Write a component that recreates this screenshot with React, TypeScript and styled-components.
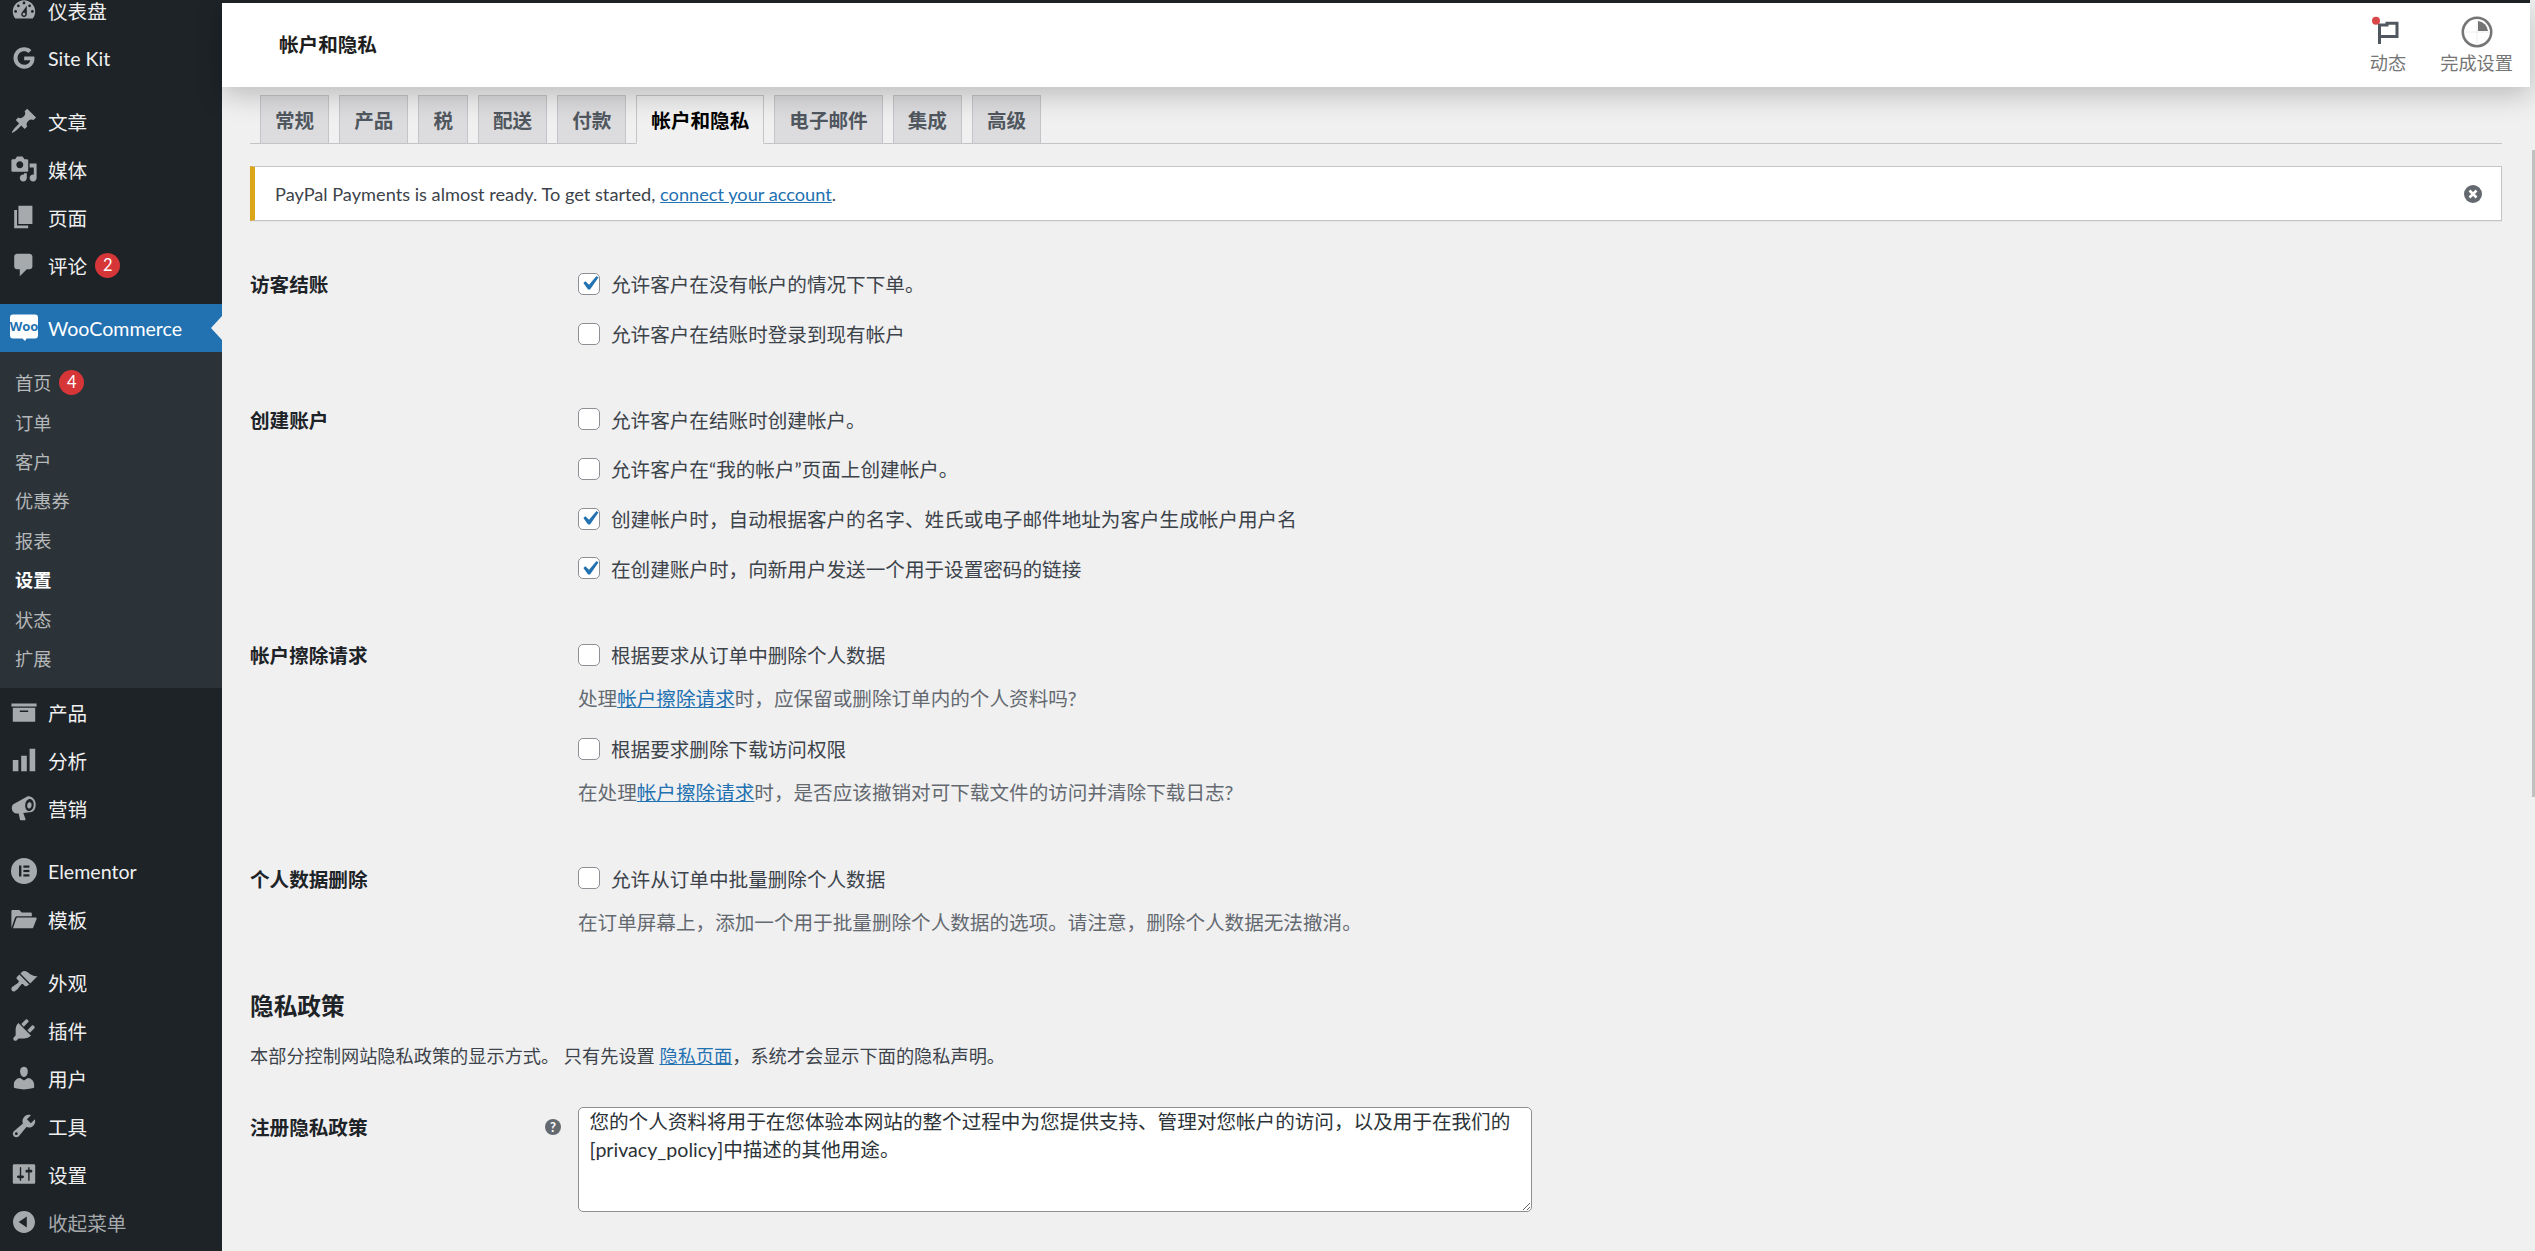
import React from "react";
import styled, { createGlobalStyle } from "styled-components";
import { FaGoogle } from "react-icons/fa";

const GlobalStyle = createGlobalStyle`
  html, body {
    margin: 0;
    padding: 0;
    height: 100%;
    overflow: hidden;
    background: #f0f0f1;
  }
  * {
    box-sizing: border-box;
  }
  body {
    font-family: Lato, "Noto Sans CJK SC", sans-serif;
    color: #3c434a;
  }
`;

const dashicons: Record<string, string> = {
  dashboard:
    "M3.76 16h12.48c1.1-1.37 1.76-3.11 1.76-5 0-4.42-3.58-8-8-8s-8 3.58-8 8c0 1.89.66 3.63 1.76 5zM10 4c.55 0 1 .45 1 1s-.45 1-1 1-1-.45-1-1 .45-1 1-1zM6 6c.55 0 1 .45 1 1s-.45 1-1 1-1-.45-1-1 .45-1 1-1zm8 0c.55 0 1 .45 1 1s-.45 1-1 1-1-.45-1-1 .45-1 1-1zm-5.37 5.55L12 7v6c0 1.1-.9 2-2 2s-2-.9-2-2c0-.57.24-1.08.63-1.45zM4 10c.55 0 1 .45 1 1s-.45 1-1 1-1-.45-1-1 .45-1 1-1zm12 0c.55 0 1 .45 1 1s-.45 1-1 1-1-.45-1-1 .45-1 1-1zm-5 3c0-.55-.45-1-1-1s-1 .45-1 1 .45 1 1 1 1-.45 1-1z",
  post: "M10.44 3.02l1.82-1.82 6.36 6.35-1.83 1.82c-1.05-.68-2.48-.57-3.41.36l-.75.75c-.92.93-1.04 2.35-.35 3.41l-1.83 1.82-2.41-2.41-2.8 2.79c-.42.42-3.38 2.71-3.8 2.29s1.86-3.39 2.28-3.81l2.79-2.79L4.1 9.36l1.83-1.82c1.05.69 2.48.57 3.4-.36l.75-.75c.93-.92 1.05-2.35.36-3.41z",
  media:
    "M13 11V4c0-.55-.45-1-1-1h-1.67L9 1H5L3.67 3H2c-.55 0-1 .45-1 1v7c0 .55.45 1 1 1h10c.55 0 1-.45 1-1zM7 4.5c1.38 0 2.5 1.12 2.5 2.5S8.38 9.5 7 9.5 4.5 8.38 4.5 7 5.62 4.5 7 4.5zM14 6h5v10.5c0 1.38-1.12 2.5-2.5 2.5S14 17.88 14 16.5s1.12-2.5 2.5-2.5c.17 0 .34.02.5.05V9h-3V6zm-4 8.05V13h2v3.5c0 1.38-1.12 2.5-2.5 2.5S7 17.88 7 16.5 8.12 14 9.5 14c.17 0 .34.02.5.05z",
  page: "M6 15V2h10v13H6zm-1 1h8v2H3V5h2v11z",
  comments:
    "M5 2h9c1.1 0 2 .9 2 2v7c0 1.1-.9 2-2 2h-2l-5 5v-5H5c-1.1 0-2-.9-2-2V4c0-1.1.9-2 2-2z",
  archive: "M19 4v2H1V4h18zM2 7h16v10H2V7zm11 3V9H7v1h6z",
  chart: "M18 18V2h-4v16h4zm-6 0V7H8v11h4zm-6 0v-8H2v8h4z",
  megaphone:
    "M16.9 3.4c1.1 1.2 1.7 3.2 1.4 5.3-.3 2.1-1.4 3.7-2.8 4.2l-6 .7 1.6 4.4c.1.4-.2.8-.6.8H7.7c-.3 0-.6-.2-.6-.5L6.2 14H4.8c-1.6 0-3.3-1.4-3.5-3.5C1.1 8.4 2 7.1 3.3 6.7l8.7-4.8c1.6-.8 3.5-.1 4.9 1.5zM14.4 3.6c-1.7-.2-3.2 1.5-3.5 3.9-.3 2.4.8 4.5 2.5 4.7 1.7.2 3.2-1.5 3.5-3.9.3-2.4-.8-4.5-2.5-4.7zm-.3 2.3c.9.1 1.5 1.2 1.3 2.4-.1 1.3-.9 2.2-1.8 2.1-.9-.1-1.5-1.2-1.3-2.4.1-1.3.9-2.2 1.8-2.1z",
  folder:
    "M1 16.5V4.5c0-.5.4-.9.9-.9h4.7l1.8 1.8h6.3c.5 0 .9.4.9.9V8H5.2c-.7 0-1.3.4-1.6 1L1 16.5zM5.4 9h12.9c.5 0 .9.5.7 1l-2.4 6c-.1.4-.5.6-.9.6H2.1L4.6 9.5c.1-.3.5-.5.8-.5z",
  appearance:
    "M14.48 11.06L7.41 3.99l1.5-1.5c.5-.56 2.3-.47 3.51.32 1.21.8 1.43 1.28 2.91 2.1 1.18.64 2.45 1.26 4.45.85zm-.71.71L6.7 4.7 4.93 6.47c-.39.39-.39 1.02 0 1.41l1.06 1.06c.39.39.39 1.03 0 1.42-.6.6-1.43 1.11-2.21 1.69-.35.26-.7.53-1.01.84C1.43 13.23 1 14.09 1 15c0 .28.06.64.23.96.07.14.16.26.26.37.53.53 1.36.47 2.02.19.42-.18.79-.44 1.15-.75.3-.26.57-.54.84-.83.35-.38.66-.8.98-1.2.53-.66 1.04-1.4 1.63-2 .39-.39 1.03-.39 1.42 0l1.06 1.06c.39.39 1.02.39 1.41 0z",
  plugins:
    "M13.11 4.36L9.87 7.6 8 5.73l3.24-3.24c.35-.34 1.05-.2 1.56.32.52.51.66 1.21.31 1.55zm-8 1.77l.91-1.12 9.01 9.01-1.19.84c-.71.71-2.63 1.16-3.82 1.16H6.14L4.9 17.26c-.59.59-1.54.59-2.12 0-.59-.58-.59-1.53 0-2.12l1.24-1.24v-3.88c0-1.13.4-3.19 1.09-3.89zm7.26 3.97l3.24-3.24c.34-.35 1.04-.21 1.55.31.52.51.66 1.21.31 1.55l-3.24 3.25z",
  users:
    "M10 9.25c-2.27 0-2.73-3.44-2.73-3.44C7 4.02 7.82 2 9.97 2c2.16 0 2.98 2.02 2.71 3.81 0 0-.41 3.44-2.68 3.44zm0 2.57L12.72 10c2.39 0 4.52 2.33 4.52 4.53v2.49s-3.65 1.13-7.24 1.13c-3.65 0-7.24-1.13-7.24-1.13v-2.49c0-2.25 1.94-4.48 4.47-4.48z",
  tools:
    "M16.68 9.77c-1.34 1.34-3.3 1.67-4.95.99l-5.41 6.52c-.99.99-2.59.99-3.58 0s-.99-2.59 0-3.57l6.52-5.42c-.68-1.65-.35-3.61.99-4.95 1.28-1.28 3.12-1.62 4.72-1.06l-2.89 2.89 2.82 2.82 2.86-2.87c.53 1.58.18 3.39-1.08 4.65zM3.81 16.21c.4.39 1.04.39 1.43 0 .4-.4.4-1.04 0-1.43-.39-.4-1.03-.4-1.43 0-.39.39-.39 1.03 0 1.43z",
  settings:
    "M18 16V4c0-.55-.45-1-1-1H3c-.55 0-1 .45-1 1v12c0 .55.45 1 1 1h14c.55 0 1-.45 1-1zM8 11h1c.55 0 1 .45 1 1s-.45 1-1 1H8v1.5c0 .28-.22.5-.5.5s-.5-.22-.5-.5V13H6c-.55 0-1-.45-1-1s.45-1 1-1h1V5.5c0-.28.22-.5.5-.5s.5.22.5.5V11zm5-2h-1c-.55 0-1-.45-1-1s.45-1 1-1h1V5.5c0-.28.22-.5.5-.5s.5.22.5.5V7h1c.55 0 1 .45 1 1s-.45 1-1 1h-1v5.5c0 .28-.22.5-.5.5s-.5-.22-.5-.5V9z",
  collapse:
    "M10 2.16c4.33 0 7.84 3.51 7.84 7.84s-3.51 7.84-7.84 7.84S2.16 14.33 2.16 10 5.71 2.16 10 2.16zm2 11.72V6.12L6.18 9.97z",
};

const Dashicon = ({ name, size = 28 }: { name: string; size?: number }) => (
  <svg width={size} height={size} viewBox="0 0 20 20" fill="currentColor">
    <path fillRule="evenodd" d={dashicons[name]} />
  </svg>
);

const WooIcon = () => (
  <svg width="28" height="30" viewBox="0 0 28 30">
    <path
      d="M3 1.5h22a3 3 0 0 1 3 3v18a3 3 0 0 1-3 3h-8.5l-1.5 2.5-2.5-2.5H3a3 3 0 0 1-3-3v-18a3 3 0 0 1 3-3z"
      fill="#fff"
    />
    <text
      x="14"
      y="18"
      textAnchor="middle"
      fontFamily="'Open Sans', sans-serif"
      fontWeight="700"
      fontSize="13"
      fill="#2271b1"
    >
      Woo
    </text>
  </svg>
);

const ElementorIcon = () => (
  <svg width="26" height="26" viewBox="0 0 26 26">
    <circle cx="13" cy="13" r="13" fill="#a7aaad" />
    <rect x="8" y="7.5" width="2.4" height="11" fill="#1d2327" />
    <rect x="12.4" y="7.5" width="6" height="2.2" fill="#1d2327" />
    <rect x="12.4" y="11.9" width="6" height="2.2" fill="#1d2327" />
    <rect x="12.4" y="16.3" width="6" height="2.2" fill="#1d2327" />
  </svg>
);

const Layout = styled.div`
  position: relative;
  display: flex;
  width: 2535px;
  height: 1251px;
  overflow: hidden;
`;

const Sidebar = styled.nav`
  flex: 0 0 222px;
  background: #1d2327;
  overflow: hidden;
`;

const Menu = styled.div`
  margin-top: -14px;
`;

const Separator = styled.div`
  height: 15px;
`;

const MenuItem = styled.div<{ $active?: boolean; $muted?: boolean }>`
  position: relative;
  height: 48px;
  display: flex;
  align-items: center;
  font-size: 19.6px;
  background: ${({ $active }) => ($active ? "#2271b1" : "transparent")};
  color: ${({ $active, $muted }) =>
    $active ? "#fff" : $muted ? "#a7aaad" : "#f0f0f1"};
`;

const MenuIcon = styled.span`
  width: 28px;
  height: 28px;
  margin: 0 10.5px 0 9.5px;
  display: flex;
  align-items: center;
  justify-content: center;
  color: #a7aaad;
`;

const Arrow = styled.span`
  position: absolute;
  right: 0;
  top: 12px;
  width: 0;
  height: 0;
  border-style: solid;
  border-width: 12px 11px 12px 0;
  border-color: transparent #f0f0f1 transparent transparent;
`;

const Badge = styled.span`
  width: 25px;
  height: 25px;
  margin-left: 8px;
  border-radius: 50%;
  background: #d63638;
  color: #fff;
  font-size: 16.5px;
  display: flex;
  align-items: center;
  justify-content: center;
`;

const SubMenu = styled.div`
  background: #2c3338;
  padding: 10.5px 0 10.5px;
`;

const SubItem = styled.div<{ $current?: boolean }>`
  height: 39.4px;
  padding-left: 15px;
  display: flex;
  align-items: center;
  font-size: 18.2px;
  color: ${({ $current }) => ($current ? "#fff" : "#b5b8ba")};
  font-weight: ${({ $current }) => ($current ? 700 : 400)};
`;

const Main = styled.div`
  flex: 0 0 2308px;
  display: flex;
  flex-direction: column;
`;

const TopStrip = styled.div`
  height: 3px;
  background: #1d2327;
`;

const Header = styled.header`
  position: relative;
  z-index: 2;
  height: 84px;
  background: #fff;
  padding: 0 17px 0 57px;
  display: flex;
  align-items: center;
  justify-content: space-between;
  box-shadow: 0 8px 26px rgba(0, 0, 0, 0.22);
`;

const HeaderTitle = styled.h1`
  margin: 0 0 3px;
  font-size: 19.6px;
  font-weight: 700;
  color: #1e1e1e;
`;

const HeaderActions = styled.div`
  align-self: flex-start;
  padding-top: 11px;
  display: flex;
  gap: 34px;
`;

const HeaderAction = styled.div`
  height: 61px;
  display: flex;
  flex-direction: column;
  align-items: center;
  justify-content: space-between;
  color: #757575;
  font-size: 18.2px;
`;

const ActionIcon = styled.div`
  height: 34px;
  display: flex;
  align-items: flex-start;
`;

const Content = styled.main`
  padding: 8px 0 0 28px;
  width: 2280px;
`;

const Tabs = styled.div`
  height: 49px;
  display: flex;
  gap: 10px;
  padding-left: 10px;
  border-bottom: 1px solid #c3c4c7;
`;

const Tab = styled.div<{ $active?: boolean }>`
  height: ${({ $active }) => ($active ? "49px" : "48px")};
  padding: 0 14px;
  display: flex;
  align-items: center;
  font-size: 19.6px;
  font-weight: 700;
  border: 1px solid #c3c4c7;
  border-bottom: ${({ $active }) => ($active ? "1px solid #f0f0f1" : "none")};
  background: ${({ $active }) => ($active ? "#f0f0f1" : "#dcdcde")};
  color: ${({ $active }) => ($active ? "#000" : "#50575e")};
`;

const Notice = styled.div`
  position: relative;
  margin-top: 22px;
  height: 55px;
  padding-left: 20px;
  display: flex;
  align-items: center;
  justify-content: space-between;
  background: #fff;
  border: 1px solid #c3c4c7;
  border-left: 5px solid #dba617;
  box-shadow: 0 1px 1px rgba(0, 0, 0, 0.04);
  font-size: 18.2px;
  color: #3c434a;
`;

const Dismiss = styled.span`
  margin-right: 19px;
  color: #646970;
  display: flex;
`;

const A = styled.a`
  color: #2271b1;
  text-decoration: underline;
`;

const Row = styled.section<{ $top?: number }>`
  margin-top: ${({ $top }) => $top ?? 36}px;
  display: grid;
  grid-template-columns: 328px 1fr;
`;

const RowLabel = styled.div`
  position: relative;
  height: 49.7px;
  display: flex;
  align-items: center;
  font-size: 19.6px;
  font-weight: 700;
  color: #1d2327;
`;

const Fields = styled.div``;

const Option = styled.label`
  height: 49.7px;
  display: flex;
  align-items: center;
  gap: 11px;
  font-size: 19.6px;
  color: #3c434a;
`;

const Box = styled.span`
  flex: none;
  width: 22px;
  height: 22px;
  background: #fff;
  border: 1px solid #8c8f94;
  border-radius: 5px;
  display: flex;
  align-items: center;
  justify-content: center;

  svg {
    flex: none;
  }
`;

const Description = styled.div`
  height: 36px;
  margin-bottom: 8px;
  display: flex;
  align-items: center;
  font-size: 19.6px;
  color: #646970;
  white-space: pre;
`;

const SectionTitle = styled.h2`
  margin: 44px 0 0;
  height: 30px;
  line-height: 30px;
  font-size: 23.66px;
  font-weight: 700;
  color: #1d2327;
`;

const SectionText = styled.p`
  margin: 20px 0 0;
  height: 30px;
  line-height: 30px;
  font-size: 18.2px;
  color: #3c434a;
`;

const PolicyLabel = styled(RowLabel)`
  height: 38px;
`;

const Help = styled.span`
  position: absolute;
  left: 295px;
  top: 12px;
  width: 16px;
  height: 16px;
  border-radius: 50%;
  background: #646970;
  color: #fff;
  font-size: 13px;
  font-weight: 700;
  display: flex;
  align-items: center;
  justify-content: center;
`;

const PolicyText = styled.textarea`
  display: block;
  width: 954px;
  height: 105px;
  padding: 0 10.4px;
  border: 1px solid #8c8f94;
  border-radius: 5px;
  background: #fff;
  color: #2c3338;
  font-family: inherit;
  font-size: 19.6px;
  line-height: 28px;
  outline: none;
  overflow: hidden;
`;

const ScrollThumb = styled.div`
  position: absolute;
  right: 0;
  top: 150px;
  width: 3px;
  height: 647px;
  background: #c1c1c1;
`;

const Check = () => (
  <svg width="29" height="29" viewBox="0 0 20 20">
    <path
      d="M14.83 4.89l1.34.94-5.81 8.38H9.02L5.78 9.67l1.34-1.25 2.57 2.4z"
      fill="#2271b1"
    />
  </svg>
);

const Checkbox = ({ checked }: { checked?: boolean }) => (
  <Box>{checked && <Check />}</Box>
);

const topGroup = [
  { icon: "post", label: "文章" },
  { icon: "media", label: "媒体" },
  { icon: "page", label: "页面" },
];

const wooLinks = ["订单", "客户", "优惠券", "报表", "设置", "状态", "扩展"];

const App: React.FC = () => {
  return (
    <Layout>
      <GlobalStyle />
      <Sidebar>
        <Menu>
          <MenuItem>
            <MenuIcon>
              <Dashicon name="dashboard" />
            </MenuIcon>
            仪表盘
          </MenuItem>
          <MenuItem>
            <MenuIcon>
              <FaGoogle size={22} />
            </MenuIcon>
            Site Kit
          </MenuItem>
          <Separator />
          {topGroup.map((item) => (
            <MenuItem key={item.label}>
              <MenuIcon>
                <Dashicon name={item.icon} />
              </MenuIcon>
              {item.label}
            </MenuItem>
          ))}
          <MenuItem>
            <MenuIcon>
              <Dashicon name="comments" />
            </MenuIcon>
            评论
            <Badge>2</Badge>
          </MenuItem>
          <Separator />
          <MenuItem $active>
            <MenuIcon>
              <WooIcon />
            </MenuIcon>
            WooCommerce
            <Arrow />
          </MenuItem>
          <SubMenu>
            <SubItem>
              首页
              <Badge>4</Badge>
            </SubItem>
            {wooLinks.map((link) => (
              <SubItem key={link} $current={link === "设置"}>
                {link}
              </SubItem>
            ))}
          </SubMenu>
          <MenuItem>
            <MenuIcon>
              <Dashicon name="archive" />
            </MenuIcon>
            产品
          </MenuItem>
          <MenuItem>
            <MenuIcon>
              <Dashicon name="chart" />
            </MenuIcon>
            分析
          </MenuItem>
          <MenuItem>
            <MenuIcon>
              <Dashicon name="megaphone" />
            </MenuIcon>
            营销
          </MenuItem>
          <Separator />
          <MenuItem>
            <MenuIcon>
              <ElementorIcon />
            </MenuIcon>
            Elementor
          </MenuItem>
          <MenuItem>
            <MenuIcon>
              <Dashicon name="folder" />
            </MenuIcon>
            模板
          </MenuItem>
          <Separator />
          <MenuItem>
            <MenuIcon>
              <Dashicon name="appearance" />
            </MenuIcon>
            外观
          </MenuItem>
          <MenuItem>
            <MenuIcon>
              <Dashicon name="plugins" />
            </MenuIcon>
            插件
          </MenuItem>
          <MenuItem>
            <MenuIcon>
              <Dashicon name="users" />
            </MenuIcon>
            用户
          </MenuItem>
          <MenuItem>
            <MenuIcon>
              <Dashicon name="tools" />
            </MenuIcon>
            工具
          </MenuItem>
          <MenuItem>
            <MenuIcon>
              <Dashicon name="settings" />
            </MenuIcon>
            设置
          </MenuItem>
          <MenuItem $muted>
            <MenuIcon>
              <Dashicon name="collapse" />
            </MenuIcon>
            收起菜单
          </MenuItem>
        </Menu>
      </Sidebar>

      <Main>
        <TopStrip />
        <Header>
          <HeaderTitle>帐户和隐私</HeaderTitle>
          <HeaderActions>
            <HeaderAction>
              <ActionIcon>
                <svg width="30" height="34" viewBox="0 0 30 34" style={{ overflow: "visible" }}>
                  <path
                    d="M6.5 9.5V30M6.5 11H14V9.3H24V22.5H6.5"
                    fill="none"
                    stroke="#50575e"
                    strokeWidth="3"
                  />
                  <circle cx="3" cy="6.7" r="4" fill="#d94848" />
                </svg>
              </ActionIcon>
              动态
            </HeaderAction>
            <HeaderAction>
              <ActionIcon>
                <svg width="32" height="34" viewBox="0 0 32 34">
                  <circle cx="16" cy="18" r="14.2" fill="#fff" stroke="#757575" strokeWidth="2.6" />
                  <path d="M16 5v26M3 18h26" stroke="#eee" strokeWidth="1" />
                  <path d="M17 7a11 11 0 0 1 10 10H17z" fill="#757575" />
                </svg>
              </ActionIcon>
              完成设置
            </HeaderAction>
          </HeaderActions>
        </Header>

        <Content>
          <Tabs>
            <Tab>常规</Tab>
            <Tab>产品</Tab>
            <Tab>税</Tab>
            <Tab>配送</Tab>
            <Tab>付款</Tab>
            <Tab $active>帐户和隐私</Tab>
            <Tab>电子邮件</Tab>
            <Tab>集成</Tab>
            <Tab>高级</Tab>
          </Tabs>

          <Notice>
            <span>
              PayPal Payments is almost ready. To get started,{" "}
              <A href="#">connect your account</A>.
            </span>
            <Dismiss>
              <svg width="18" height="18" viewBox="0 0 18 18">
                <circle cx="9" cy="9" r="9" fill="#646970" />
                <path d="M5.5 5.5l7 7M12.5 5.5l-7 7" stroke="#fff" strokeWidth="2.6" />
              </svg>
            </Dismiss>
          </Notice>

          <Row $top={38}>
            <RowLabel>访客结账</RowLabel>
            <Fields>
              <Option>
                <Checkbox checked />
                允许客户在没有帐户的情况下下单。
              </Option>
              <Option>
                <Checkbox />
                允许客户在结账时登录到现有帐户
              </Option>
            </Fields>
          </Row>

          <Row>
            <RowLabel>创建账户</RowLabel>
            <Fields>
              <Option>
                <Checkbox />
                允许客户在结账时创建帐户。
              </Option>
              <Option>
                <Checkbox />
                允许客户在“我的帐户”页面上创建帐户。
              </Option>
              <Option>
                <Checkbox checked />
                创建帐户时，自动根据客户的名字、姓氏或电子邮件地址为客户生成帐户用户名
              </Option>
              <Option>
                <Checkbox checked />
                在创建账户时，向新用户发送一个用于设置密码的链接
              </Option>
            </Fields>
          </Row>

          <Row $top={37}>
            <RowLabel>帐户擦除请求</RowLabel>
            <Fields>
              <Option>
                <Checkbox />
                根据要求从订单中删除个人数据
              </Option>
              <Description>
                处理<A href="#">帐户擦除请求</A>时，应保留或删除订单内的个人资料吗?
              </Description>
              <Option>
                <Checkbox />
                根据要求删除下载访问权限
              </Option>
              <Description>
                在处理<A href="#">帐户擦除请求</A>时，是否应该撤销对可下载文件的访问并清除下载日志?
              </Description>
            </Fields>
          </Row>

          <Row>
            <RowLabel>个人数据删除</RowLabel>
            <Fields>
              <Option>
                <Checkbox />
                允许从订单中批量删除个人数据
              </Option>
              <Description>
                在订单屏幕上，添加一个用于批量删除个人数据的选项。请注意，删除个人数据无法撤消。
              </Description>
            </Fields>
          </Row>

          <SectionTitle>隐私政策</SectionTitle>
          <SectionText>
            本部分控制网站隐私政策的显示方式。 只有先设置 <A href="#">隐私页面</A>，系统才会显示下面的隐私声明。
          </SectionText>

          <Row>
            <PolicyLabel>
              注册隐私政策
              <Help>?</Help>
            </PolicyLabel>
            <PolicyText
              readOnly
              defaultValue="您的个人资料将用于在您体验本网站的整个过程中为您提供支持、管理对您帐户的访问，以及用于在我们的 [privacy_policy]中描述的其他用途。"
            />
          </Row>
        </Content>
      </Main>
      <ScrollThumb />
    </Layout>
  );
};

export default App;
